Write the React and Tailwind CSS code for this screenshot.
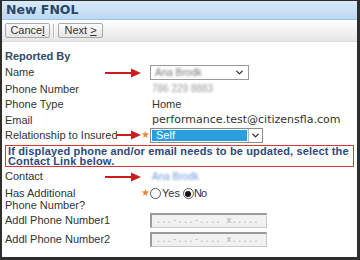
import { ChevronDown } from 'lucide-react'

const font = { fontFamily: '"Liberation Sans", Arial, sans-serif' }
const wide = { fontFamily: '"DejaVu Sans", Verdana, sans-serif' }

// red annotation arrow
function Arrow({ className, w = 36 }) {
  return (
    <svg className={className} width={w} height="10" viewBox={`0 0 ${w} 10`}>
      <line x1="0" y1="5" x2={w - 9} y2="5" stroke="#c81e1e" strokeWidth="2" />
      <polygon points={`${w - 10},0.5 ${w},5 ${w - 10},9.5`} fill="#c81e1e" />
    </svg>
  )
}

function Star() {
  return <span className="text-[#e08a3a] text-[10px] leading-none">★</span>
}

function Row({ label, star, arrow, arrowW, children, className = 'h-[15.5px]' }) {
  return (
    <div className={`flex items-center ${className}`}>
      <div className="relative w-[136px] shrink-0 flex items-center h-full">
        <span className="whitespace-nowrap">{label}</span>
        {arrow && <Arrow w={arrowW} className="absolute top-1/2 -translate-y-1/2 right-0" />}
      </div>
      <div className="w-[8px] shrink-0 flex items-center justify-center">{star && <Star />}</div>
      <div className="flex-1 flex items-center pl-[1px]">{children}</div>
    </div>
  )
}

function PhoneInput() {
  return (
    <div className="w-[117px] h-[15px] bg-[#f1f1f1] border border-[#c8c8c8] border-t-2 border-l-2 border-t-[#9a9a9a] border-l-[#9a9a9a] flex items-center pl-[4px] text-[8px] text-[#aaa] tracking-[0.6px] whitespace-nowrap overflow-hidden" style={{ fontFamily: '"DejaVu Sans Mono", monospace' }}>
      ...-...-.... x.....
    </div>
  )
}

export default function App() {
  return (
    <div className="w-[360px] h-[260px] bg-white border-2 border-r-[3px] border-b-[3px] border-t border-[#2e2e2e] overflow-hidden text-[11px] text-[#333]" style={font}>
      {/* title bar */}
      <div className="h-[19px] bg-gradient-to-b from-[#d9eafa] to-[#bcd8f3] border-b border-[#9ec4ea] flex items-center pl-[4px]">
        <span className="text-[12.5px] font-bold text-[#2a4766]" style={wide}>New FNOL</span>
      </div>

      {/* toolbar */}
      <div className="h-[22px] bg-gradient-to-b from-white to-[#e6e6e6] border-b border-[#dcdcdc] flex items-center pl-[3px] gap-[3px]">
        <button className="h-[15px] w-[45px] border border-[#a8a8a8] rounded-[2px] bg-gradient-to-b from-white to-[#e4e4e4] text-[11px] text-[#333] leading-none">
          Cance<u>l</u>
        </button>
        <div className="w-[2px] h-[14px] border-l border-r border-l-[#b8b8b8] border-r-white" />
        <button className="h-[15px] w-[45px] border border-[#a8a8a8] rounded-[2px] bg-gradient-to-b from-white to-[#e4e4e4] text-[11px] text-[#333] leading-none">
          Next <u>&gt;</u>
        </button>
      </div>

      {/* form */}
      <div className="px-[3px] pt-[7px]">
        <div className="h-[15px] flex items-center font-bold text-[#2c4a6c]">Reported By</div>

        <Row label="Name" arrow className="h-[17px]">
          <div className="w-[99px] h-[15px] border border-[#9a9a9a] flex items-center justify-between pl-[4px] pr-[3px]">
            <span className="blur-[1.3px] text-[#777] text-[10px]">Ana Brodk</span>
            <ChevronDown size={11} strokeWidth={3} className="text-[#333]" />
          </div>
        </Row>
        <Row label="Phone Number">
          <span className="blur-[1.3px] text-[#999] text-[10px] pl-[2px]">786 229 8883</span>
        </Row>
        <Row label="Phone Type">
          <span className="pl-[2px]">Home</span>
        </Row>
        <Row label="Email">
          <span className="pl-[2px] whitespace-nowrap" style={wide}>performance.test@citizensfla.com</span>
        </Row>
        <Row label="Relationship to Insured" star arrow arrowW={25}>
          <div className="w-[113px] h-[15px] border border-[#8a8a8a] flex items-stretch">
            <div className="flex-1 bg-[#2a9fe0] text-white flex items-center pl-[4px] m-[1px]">Self</div>
            <div className="w-[14px] flex items-center justify-center bg-white border-l border-[#bbb]">
              <ChevronDown size={11} strokeWidth={3} className="text-[#333]" />
            </div>
          </div>
        </Row>

        <div className="mt-[2px] border border-[#d23a3a] px-[2px] font-bold text-[#2b4a7d] leading-[10px] tracking-[0.15px]">
          If displayed phone and/or email needs to be updated, select the Contact Link below.
        </div>

        <Row label="Contact" arrow className="h-[17px] mt-[1px]">
          <span className="blur-[1.3px] text-[#6f9be0] text-[10px] pl-[2px]">Ana Brodk</span>
        </Row>

        <div className="flex items-start mt-[2px]">
          <div className="w-[136px] shrink-0 leading-[12px]">Has Additional<br />Phone Number?</div>
          <div className="w-[8px] shrink-0 flex justify-center pt-[1px]"><Star /></div>
          <div className="flex items-center pl-[1px] h-[13px]">
            <span className="w-[11px] h-[11px] rounded-full border border-[#555] bg-white" />
            <span className="ml-[1px]">Yes</span>
            <span className="ml-[3px] w-[11px] h-[11px] rounded-full border border-[#555] bg-white flex items-center justify-center">
              <span className="w-[6px] h-[6px] rounded-full bg-[#111]" />
            </span>
            <span className="tracking-[-1px]">No</span>
          </div>
        </div>

        <Row label="Addl Phone Number1" className="h-[19px]">
          <PhoneInput />
        </Row>
        <Row label="Addl Phone Number2" className="h-[19px]">
          <PhoneInput />
        </Row>
      </div>
    </div>
  )
}
